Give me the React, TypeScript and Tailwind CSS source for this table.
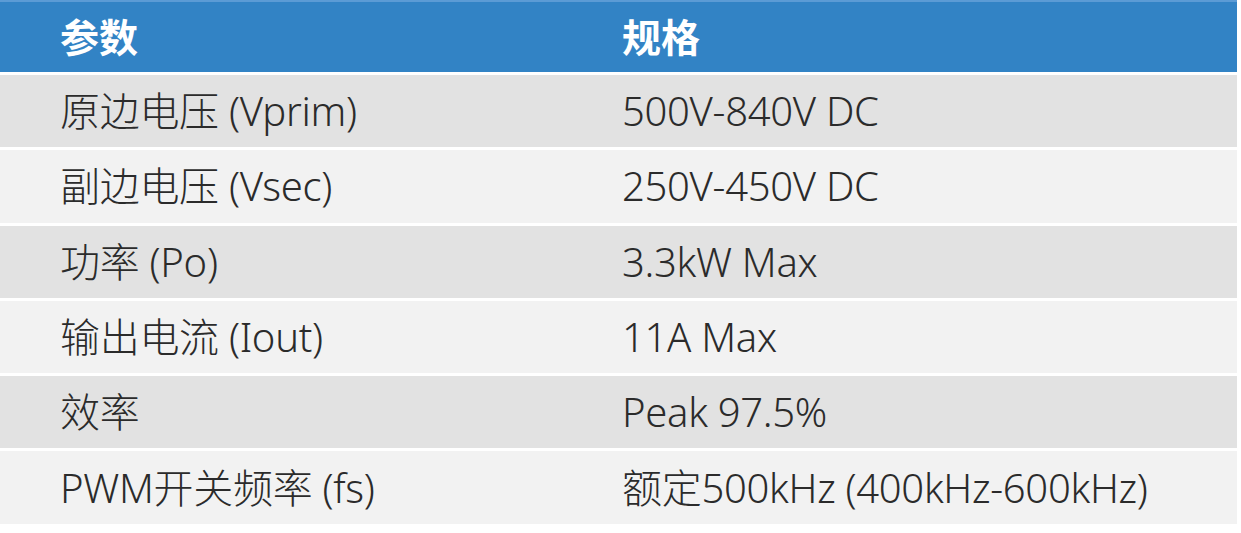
import React from "react";

const rows: [string, string][] = [
  ["原边电压 (Vprim)", "500V-840V DC"],
  ["副边电压 (Vsec)", "250V-450V DC"],
  ["功率 (Po)", "3.3kW Max"],
  ["输出电流 (Iout)", "11A Max"],
  ["效率", "Peak 97.5%"],
  ["PWM开关频率 (fs)", "额定500kHz (400kHz-600kHz)"],
];

export default function App() {
  return (
    <div
      className="w-[1241px] h-[533px] bg-white overflow-hidden"
      style={{ fontFamily: '"Noto Sans", "Noto Sans CJK SC", sans-serif' }}
    >
      <div className="flex flex-col gap-[3px] w-[1237px]">
        <div className="flex items-center h-[72px] bg-[#3283c5] border-t-2 border-[#5b9bd5] text-white font-bold text-[39px]">
          <div className="w-[622px] pl-[60px] shrink-0">参数</div>
          <div>规格</div>
        </div>
        {rows.map(([a, b], i) => (
          <div
            key={i}
            className={`flex items-center h-[72.3px] text-[40px] tracking-[-0.3px] font-light text-[#2b2b2b] ${
              i % 2 === 0 ? "bg-[#e2e2e2]" : "bg-[#f2f2f2]"
            }`}
          >
            <div className="w-[622px] pl-[60px] shrink-0 whitespace-nowrap">{a}</div>
            <div className="whitespace-nowrap">{b}</div>
          </div>
        ))}
      </div>
    </div>
  );
}
